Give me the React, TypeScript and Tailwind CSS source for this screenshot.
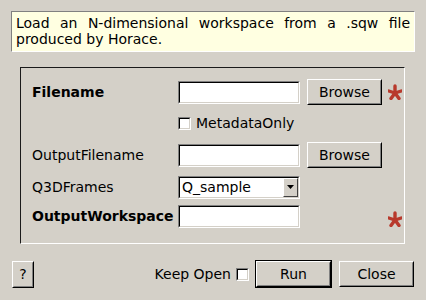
import React from 'react';

function Sunken({ className = '', children }: { className?: string; children?: React.ReactNode }) {
  return (
    <div className={`border border-t-[#808080] border-l-[#808080] border-r-white border-b-white ${className}`}>
      <div className="h-full w-full border border-t-black border-l-black border-r-[#d4d0c8] border-b-[#d4d0c8] bg-white flex items-center">
        {children}
      </div>
    </div>
  );
}

function Button({ label, className = '' }: { label: string; className?: string }) {
  return (
    <div className={`border border-t-white border-l-white border-r-black border-b-black bg-[#d4d0c8] ${className}`}>
      <div className="h-full w-full border border-t-[#d4d0c8] border-l-[#d4d0c8] border-r-[#808080] border-b-[#808080] flex items-center justify-center">
        {label}
      </div>
    </div>
  );
}

function Check() {
  return (
    <div className="w-[13px] h-[13px] border border-t-[#808080] border-l-[#808080] border-r-white border-b-white">
      <div className="h-full w-full border border-t-black border-l-black border-r-[#d4d0c8] border-b-[#d4d0c8] bg-white" />
    </div>
  );
}

function Star() {
  return (
    <svg width="14" height="16" viewBox="0 0 14 16" className="shrink-0">
      <g stroke="#b8392c" strokeWidth="3.4" strokeLinecap="round">
        <line x1="7" y1="9" x2="7" y2="2" />
        <line x1="7" y1="9" x2="13.2" y2="7" />
        <line x1="7" y1="9" x2="0.8" y2="7" />
        <line x1="7" y1="9" x2="11" y2="14.5" />
        <line x1="7" y1="9" x2="3" y2="14.5" />
      </g>
    </svg>
  );
}

export default function App() {
  return (
    <div className="w-[426px] h-[300px] bg-[#d4d0c8] text-[14px] text-black flex flex-col overflow-hidden"
      style={{ fontFamily: '"DejaVu Sans", sans-serif' }}>
      {/* description */}
      <div className="mt-[11px] mx-[11px] h-[41px] bg-[#ffffe1] border border-t-[#808080] border-l-[#808080] border-r-white border-b-white px-[4px] pt-[3px] leading-[16px] text-justify">
        Load an N-dimensional workspace from a .sqw file produced by Horace.
      </div>

      {/* properties group */}
      <div className="mt-[15px] ml-[20px] w-[385px] h-[177px] border border-t-[#1a1a1a] border-l-[#1a1a1a] border-r-white border-b-white pl-[11px] pt-[11px] flex flex-col">
        <div className="h-[26px] flex items-center">
          <div className="w-[146px] font-bold">Filename</div>
          <Sunken className="w-[122px] h-[23px]" />
          <Button label="Browse" className="ml-[7px] w-[75px] h-[26px]" />
          <div className="ml-[6px]"><Star /></div>
        </div>

        <div className="mt-[5px] h-[26px] flex items-center">
          <div className="w-[146px]" />
          <Check />
          <span className="ml-[5px]">MetadataOnly</span>
        </div>

        <div className="mt-[6px] h-[26px] flex items-center">
          <div className="w-[146px]">OutputFilename</div>
          <Sunken className="w-[122px] h-[23px]" />
          <Button label="Browse" className="ml-[7px] w-[75px] h-[26px]" />
        </div>

        <div className="mt-[6px] h-[26px] flex items-center">
          <div className="w-[146px]">Q3DFrames</div>
          <Sunken className="w-[122px] h-[23px]">
            <span className="flex-1 pl-[2px]">Q_sample</span>
            <div className="w-[15px] h-full border border-t-white border-l-white border-r-[#404040] border-b-[#404040] bg-[#d4d0c8] flex items-center justify-center">
              <svg width="7" height="4" viewBox="0 0 7 4"><path d="M0 0h7L3.5 4z" fill="#000" /></svg>
            </div>
          </Sunken>
        </div>

        <div className="mt-[3px] h-[26px] flex items-center">
          <div className="w-[146px] font-bold">OutputWorkspace</div>
          <Sunken className="w-[122px] h-[23px]" />
          <div className="w-[82px]" />
          <div className="ml-[6px] mt-[6px]"><Star /></div>
        </div>
      </div>

      {/* bottom buttons */}
      <div className="mt-[16px] flex items-center pl-[12px] pr-[12px]">
        <Button label="?" className="w-[22px] h-[27px]" />
        <div className="flex-1" />
        <span>Keep Open</span>
        <div className="ml-[5px]"><Check /></div>
        <div className="ml-[6px] border border-black">
          <Button label="Run" className="w-[75px] h-[26px]" />
        </div>
        <Button label="Close" className="ml-[7px] w-[75px] h-[26px]" />
      </div>
    </div>
  );
}
